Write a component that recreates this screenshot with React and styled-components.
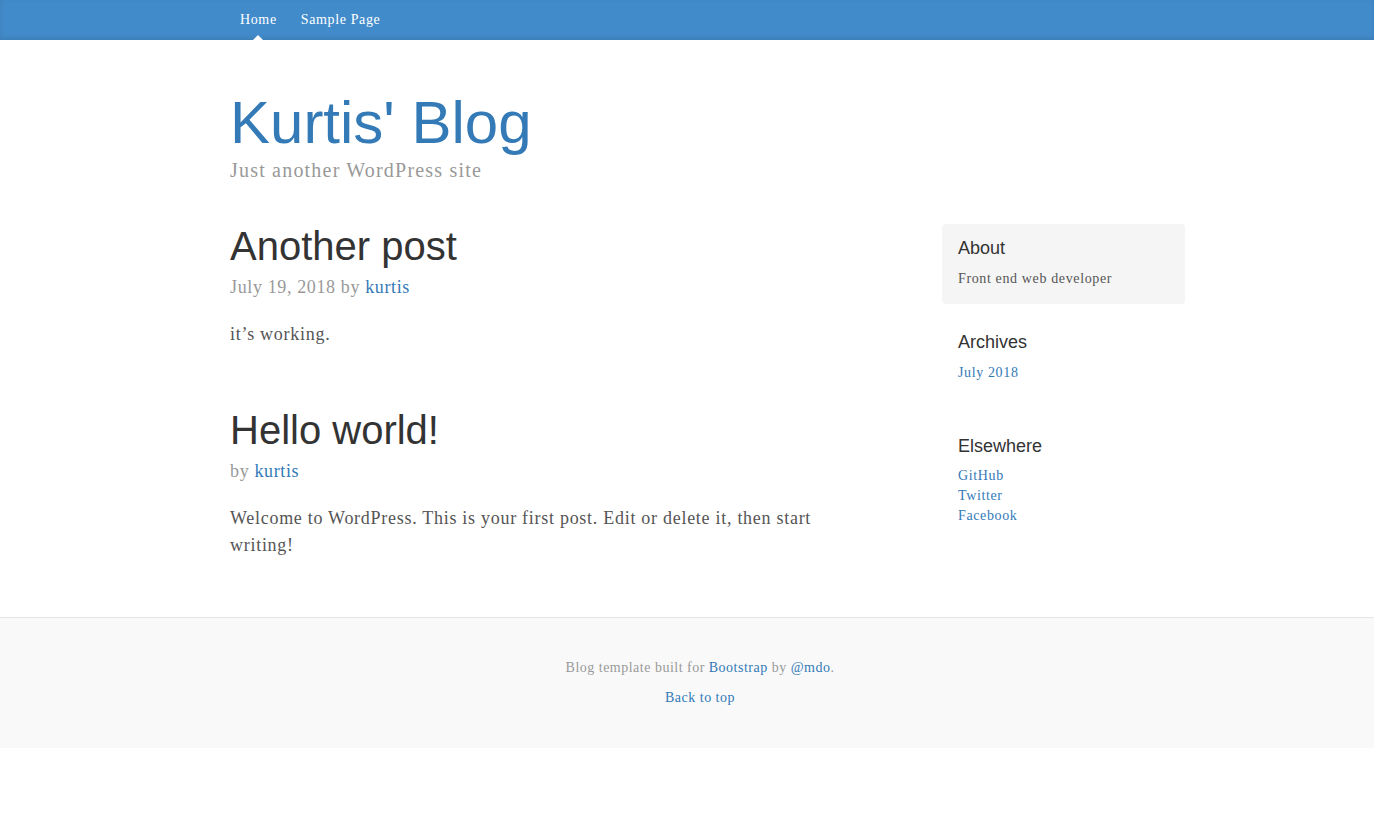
import React from "react";
import styled, { createGlobalStyle, css } from "styled-components";

const blue = "#337ab7";

// Liberation Serif stands in for Georgia; a little tracking makes up the width
const serif = (spacing = 0.045) => css`
  font-family: "Liberation Serif", "Times New Roman", serif;
  letter-spacing: ${spacing}em;
`;

const sans = css`
  font-family: "Liberation Sans", Arial, sans-serif;
  letter-spacing: normal;
`;

const GlobalStyle = createGlobalStyle`
  html, body {
    margin: 0;
    padding: 0;
    background: #fff;
  }
  body {
    font-family: "Liberation Serif", "Times New Roman", serif;
    color: #555;
  }
  a {
    color: ${blue};
    text-decoration: none;
  }
`;

const Container = styled.div`
  width: 940px;
  margin-left: calc(50% - 457px);
`;

const Masthead = styled.div`
  background-color: #428bca;
  box-shadow: inset 0 -2px 5px rgba(0, 0, 0, 0.1);
`;

const Nav = styled.nav`
  display: flex;
  gap: 4px;
`;

const NavItem = styled.a`
  ${serif(0.045)};
  position: relative;
  display: block;
  padding: 10px;
  font-size: 14px;
  line-height: 20px;
  font-weight: 500;
  color: #fff;

  ${(p) =>
    p.$active &&
    css`
      &::after {
        content: "";
        position: absolute;
        bottom: 0;
        left: 50%;
        margin-left: -5px;
        border: 5px solid transparent;
        border-bottom-color: #fff;
        border-top-width: 0;
      }
    `}
`;

const Header = styled.header`
  padding: 20px 0 40px;
`;

const Title = styled.h1`
  ${sans};
  margin: 30px 0 0;
  font-size: 60px;
  line-height: 66px;
  font-weight: normal;

  a {
    color: ${blue};
  }
`;

const Description = styled.p`
  ${serif(0.06)};
  margin: 0;
  font-size: 20px;
  line-height: 28px;
  color: #999;
`;

const Row = styled.div`
  display: flex;
  align-items: flex-start;
`;

const Main = styled.main`
  flex: none;
  width: 617px;
`;

const Post = styled.article`
  margin-bottom: 60px;

  &:last-child {
    margin-bottom: 58px;
  }
`;

const PostTitle = styled.h2`
  ${sans};
  margin: 0 0 5px;
  font-size: 40px;
  line-height: 44px;
  font-weight: normal;
  color: #333;
`;

const PostMeta = styled.p`
  ${serif(0.035)};
  margin: 0 0 20px;
  padding-top: 1px;
  font-size: 18px;
  line-height: 27px;
  color: #999;
`;

const PostBody = styled.p`
  ${serif(0.04)};
  margin: -1px 0 0;
  padding-top: 1px;
  font-size: 18px;
  line-height: 27px;
  color: #555;
`;

const Sidebar = styled.aside`
  flex: none;
  width: 243px;
  margin-left: 95px;
`;

const Module = styled.div`
  padding: 15px 15px 15px 16px;
  margin-bottom: 14px;
  border-radius: 4px;
  background-color: ${(p) => (p.$inset ? "#f5f5f5" : "transparent")};
`;

const ModuleTitle = styled.h4`
  ${sans};
  margin: 0 0 10px;
  font-size: 18px;
  line-height: 19.8px;
  font-weight: 500;
  color: #333;
`;

const ModuleText = styled.p`
  ${serif()};
  margin: 0;
  font-size: 14px;
  line-height: 20px;
  color: #555;
`;

const LinkList = styled.ol`
  ${serif()};
  list-style: none;
  padding: 0;
  margin: 0 0 ${(p) => (p.$last ? "0" : "10px")};
  font-size: 14px;
  line-height: 20px;
`;

const Footer = styled.footer`
  padding: 40px 0;
  text-align: center;
  background-color: #f9f9f9;
  border-top: 1px solid #e5e5e5;
`;

const FooterText = styled.p`
  ${serif(0.035)};
  margin: 0 0 10px;
  font-size: 14px;
  line-height: 20px;
  color: #999;

  &:last-child {
    margin-bottom: 0;
  }
`;

export default function App() {
  return (
    <>
      <GlobalStyle />
      <Masthead>
        <Container>
          <Nav>
            <NavItem href="#" $active>
              Home
            </NavItem>
            <NavItem href="#">Sample Page</NavItem>
          </Nav>
        </Container>
      </Masthead>

      <Container>
        <Header>
          <Title>
            <a href="#">Kurtis' Blog</a>
          </Title>
          <Description>Just another WordPress site</Description>
        </Header>

        <Row>
          <Main>
            <Post>
              <PostTitle>Another post</PostTitle>
              <PostMeta>
                July 19, 2018 by <a href="#">kurtis</a>
              </PostMeta>
              <PostBody>it’s working.</PostBody>
            </Post>
            <Post>
              <PostTitle>Hello world!</PostTitle>
              <PostMeta>
                by <a href="#">kurtis</a>
              </PostMeta>
              <PostBody>
                Welcome to WordPress. This is your first post. Edit or delete it, then start
                writing!
              </PostBody>
            </Post>
          </Main>

          <Sidebar>
            <Module $inset>
              <ModuleTitle>About</ModuleTitle>
              <ModuleText>Front end web developer</ModuleText>
            </Module>
            <Module>
              <ModuleTitle>Archives</ModuleTitle>
              <LinkList>
                <li>
                  <a href="#">July 2018</a>
                </li>
              </LinkList>
            </Module>
            <Module>
              <ModuleTitle>Elsewhere</ModuleTitle>
              <LinkList $last>
                <li>
                  <a href="#">GitHub</a>
                </li>
                <li>
                  <a href="#">Twitter</a>
                </li>
                <li>
                  <a href="#">Facebook</a>
                </li>
              </LinkList>
            </Module>
          </Sidebar>
        </Row>
      </Container>

      <Footer>
        <Container>
          <FooterText>
            Blog template built for <a href="#">Bootstrap</a> by <a href="#">@mdo</a>.
          </FooterText>
          <FooterText>
            <a href="#">Back to top</a>
          </FooterText>
        </Container>
      </Footer>
    </>
  );
}
